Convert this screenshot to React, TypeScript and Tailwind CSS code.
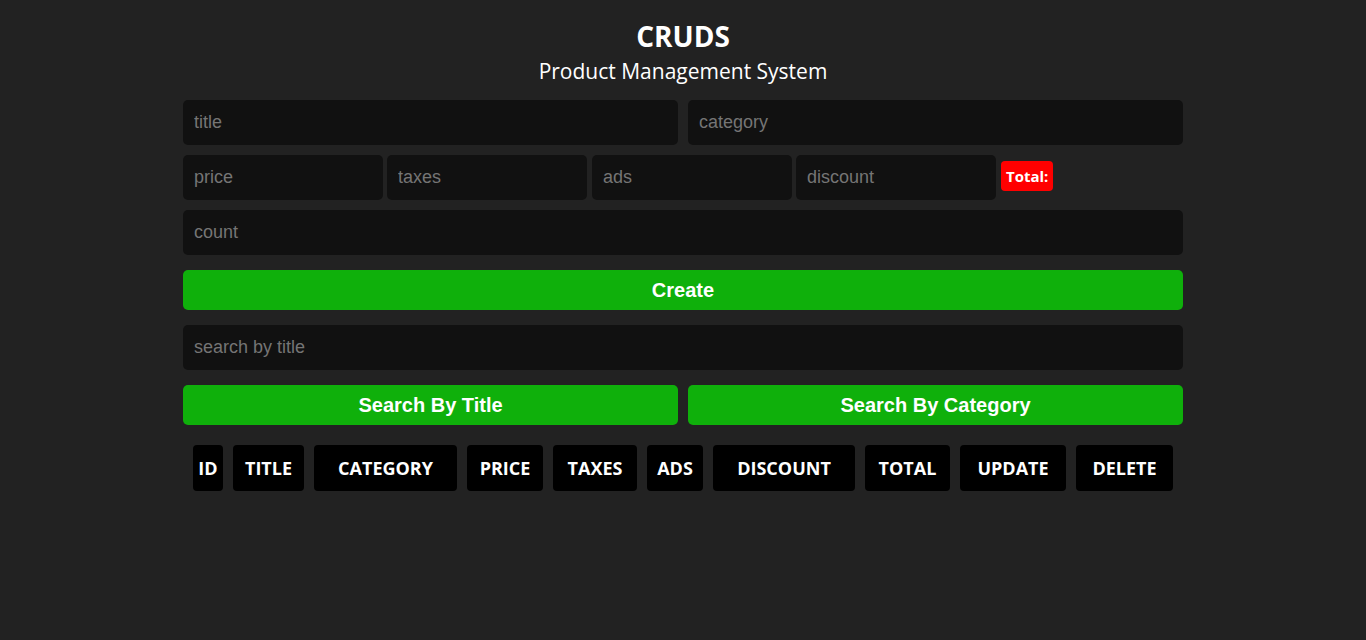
import React from 'react';

const heads = [
  { label: 'id', w: 'w-[30px]' },
  { label: 'title', w: 'w-[71px]' },
  { label: 'category', w: 'w-[143px]' },
  { label: 'price', w: 'w-[76px]' },
  { label: 'taxes', w: 'w-[84px]' },
  { label: 'ads', w: 'w-[56px]' },
  { label: 'discount', w: 'w-[142px]' },
  { label: 'total', w: 'w-[85px]' },
  { label: 'update', w: 'w-[106px]' },
  { label: 'delete', w: 'w-[97px]' },
];

const inputCls =
  "h-[45px] w-full rounded-[5px] bg-[#111111] px-[11px] text-[18px] text-white outline-none placeholder:text-[#757575] font-['Liberation_Sans',Arial,sans-serif]";

const greenBtn =
  "h-10 w-full rounded-[5px] bg-[#0fb00b] text-[20px] font-bold text-white font-['Liberation_Sans',Arial,sans-serif]";

export default function App() {
  return (
    <div className="min-h-[640px] bg-[#222222] text-white">
      <div className="mx-auto w-[1000px] pt-[17px]">
        <div className="text-center font-['Open_Sans','Noto_Sans',sans-serif]">
          <h1 className="text-[28px] font-bold leading-[38px]">CRUDS</h1>
          <p className="text-[21px] leading-[32px]">Product Management System</p>
        </div>

        <div className="mt-[13px] flex gap-[10px]">
          <input className={inputCls} placeholder="title" />
          <input className={inputCls} placeholder="category" />
        </div>

        <div className="mt-[10px] flex items-start">
          <input className={inputCls + ' !w-[200px]'} placeholder="price" />
          <input className={inputCls + ' ml-[4px] !w-[200px]'} placeholder="taxes" />
          <input className={inputCls + ' ml-[5px] !w-[200px]'} placeholder="ads" />
          <input className={inputCls + ' ml-[4px] !w-[200px]'} placeholder="discount" />
          <span className="ml-[5px] mt-[6px] h-[30px] rounded-[4px] bg-[#ff0000] px-[5px] py-[5px] text-[15px] font-bold leading-[20px] font-['Open_Sans','Noto_Sans',sans-serif]">
            Total:
          </span>
        </div>

        <div className="mt-[10px]">
          <input className={inputCls} placeholder="count" />
        </div>

        <button className={greenBtn + ' mt-[15px]'}>Create</button>

        <div className="mt-[15px]">
          <input className={inputCls} placeholder="search by title" />
        </div>

        <div className="mt-[15px] flex gap-[10px]">
          <button className={greenBtn}>Search By Title</button>
          <button className={greenBtn}>Search By Category</button>
        </div>

        <table className="mt-[10px] w-full border-separate border-spacing-[10px]">
          <thead>
            <tr>
              {heads.map((h) => (
                <th
                  key={h.label}
                  className={
                    h.w +
                    " h-[46px] rounded-[4px] bg-black px-0 text-[18px] font-bold uppercase font-['Open_Sans','Noto_Sans',sans-serif]"
                  }
                >
                  {h.label}
                </th>
              ))}
            </tr>
          </thead>
        </table>
      </div>
    </div>
  );
}
